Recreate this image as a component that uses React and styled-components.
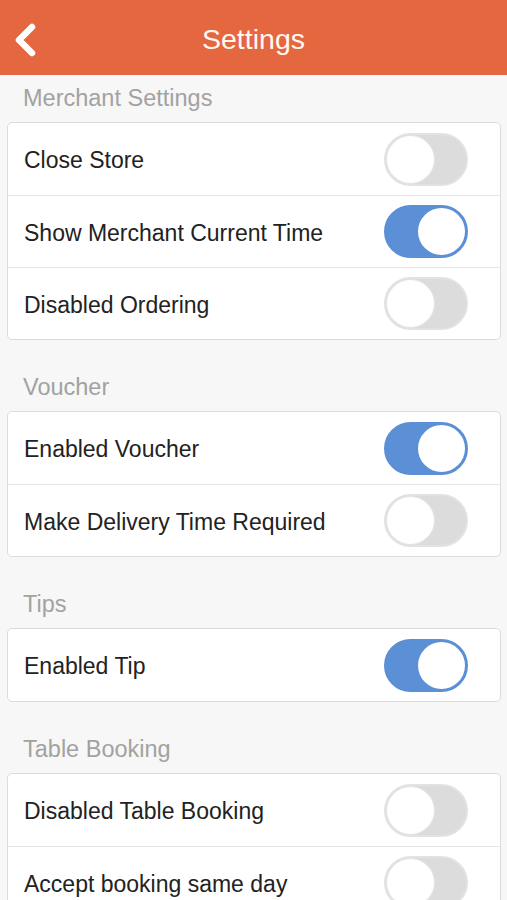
import React, { useState } from 'react'
import styled, { createGlobalStyle } from 'styled-components'

const GlobalStyle = createGlobalStyle`
  html, body {
    margin: 0;
    padding: 0;
    background: #f7f7f7;
    font-family: "Liberation Sans", Arial, sans-serif;
  }
`

const Page = styled.div`
  width: 507px;
  min-height: 900px;
  background: #f7f7f7;
`

const TopBar = styled.header`
  display: flex;
  align-items: center;
  justify-content: center;
  position: relative;
  height: 75px;
  background: #e5673f;
`

const BackButton = styled.button`
  position: absolute;
  left: 11px;
  top: 22px;
  appearance: none;
  border: none;
  margin: 0;
  padding: 0;
  background: transparent;
  cursor: pointer;
  display: flex;
`

const Title = styled.h1`
  margin: 4px 0 0;
  color: #fff8f2;
  font-size: 28.5px;
  font-weight: 400;
`

const Content = styled.main`
  display: flex;
  flex-direction: column;
  padding: 0 6px 0 7px;
`

const SectionTitle = styled.h2`
  margin: ${(p) => (p.$first ? '0' : '23px')} 0 0;
  height: ${(p) => (p.$first ? '47px' : '48px')};
  display: flex;
  align-items: center;
  padding-left: 16px;
  color: #a2a2a2;
  font-size: 23.5px;
  font-weight: 400;
`

const Card = styled.section`
  background: #fff;
  border: 1px solid #dcdcdc;
  border-radius: 5px;
  overflow: hidden;
`

const Row = styled.div`
  display: flex;
  align-items: center;
  justify-content: space-between;
  height: 72px;
  box-sizing: border-box;
  padding: 0 32px 0 16px;

  & + & {
    border-top: 1px solid #e6e6e6;
  }
`

const Label = styled.span`
  padding-top: 3px;
  color: #222;
  font-size: 23px;
`

const Switch = styled.button`
  position: relative;
  appearance: none;
  margin: 0;
  padding: 0;
  width: 84px;
  height: 53px;
  border-radius: 27px;
  box-sizing: border-box;
  border: 2px solid ${(p) => (p.$on ? '#5b8fd6' : '#e2e2e2')};
  background: ${(p) => (p.$on ? '#5b8fd6' : '#dcdcdc')};
  cursor: pointer;

  &::after {
    content: '';
    position: absolute;
    top: 1px;
    left: ${(p) => (p.$on ? '32px' : '1px')};
    width: 47px;
    height: 47px;
    border-radius: 50%;
    background: #fff;
    box-shadow: ${(p) => (p.$on ? 'none' : '0 0 0 1px #e4e4e4')};
  }
`

const sections = [
  {
    title: 'Merchant Settings',
    items: [
      ['Close Store', false],
      ['Show Merchant Current Time', true],
      ['Disabled Ordering', false],
    ],
  },
  {
    title: 'Voucher',
    items: [
      ['Enabled Voucher', true],
      ['Make Delivery Time Required', false],
    ],
  },
  {
    title: 'Tips',
    items: [['Enabled Tip', true]],
  },
  {
    title: 'Table Booking',
    items: [
      ['Disabled Table Booking', false],
      ['Accept booking same day', false],
    ],
  },
]

function Toggle({ initial }) {
  const [on, setOn] = useState(initial)
  return <Switch type="button" $on={on} aria-pressed={on} onClick={() => setOn(!on)} />
}

export default function App() {
  return (
    <Page>
      <GlobalStyle />
      <TopBar>
        <BackButton type="button" aria-label="Back">
          <svg width="28" height="36" viewBox="0 0 28 36">
            <path
              d="M21 5 L8 18 L21 31"
              fill="none"
              stroke="#fff"
              strokeWidth="6.5"
              strokeLinecap="round"
              strokeLinejoin="round"
            />
          </svg>
        </BackButton>
        <Title>Settings</Title>
      </TopBar>
      <Content>
        {sections.map((s, i) => (
          <React.Fragment key={s.title}>
            <SectionTitle $first={i === 0}>{s.title}</SectionTitle>
            <Card>
              {s.items.map(([label, on]) => (
                <Row key={label}>
                  <Label>{label}</Label>
                  <Toggle initial={on} />
                </Row>
              ))}
            </Card>
          </React.Fragment>
        ))}
      </Content>
    </Page>
  )
}
